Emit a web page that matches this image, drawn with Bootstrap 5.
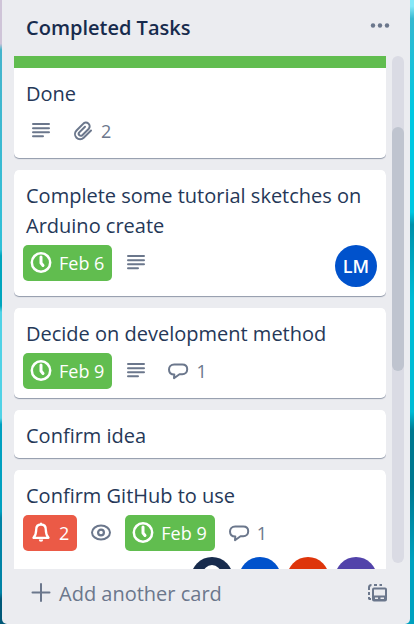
<!DOCTYPE html>
<html lang="en">
<head>
<meta charset="utf-8">
<meta name="viewport" content="width=device-width, initial-scale=1">
<title>Completed Tasks</title>
<link href="https://cdn.jsdelivr.net/npm/bootstrap@5.3.0/dist/css/bootstrap.min.css" rel="stylesheet">
<style>
  body {
    font-family: "Open Sans", "Noto Sans", sans-serif;
    font-size: 20px;
    line-height: 30px;
    color: #172b4d;
    background:
      linear-gradient(#cfc4d8 0 7%, #45b4cc 8%, #2fc0d8 40%, #00a5bd 41% 49%, #50d2e6 50% 67%, #00a0c0 68% 82%, #0083a6 83% 95%, #005878 96%) left / 50% 100% no-repeat,
      linear-gradient(#84e8f8 0 1%, #35b8d0 3%, #00c8e2 18% 34%, #0090aa 36%, #00bcd6 48% 66%, #007890 69% 78%, #00a2c0 90%) right / 50% 100% no-repeat;
  }
  .board { padding: 0 4px 0 2px; }
  .task-list { background: #ebecf0; border-radius: 0 0 5px 5px; }
  .list-head { height: 56px; padding: 0 18px 0 24px; }
  .list-head h1 { font-size: 20px; line-height: 30px; font-weight: 600; }
  .icon-btn { border: 0; background: none; padding: 0; color: #6b778c; display: flex; }
  .list-body { padding: 0 6px 0 12px; gap: 6px; min-height: 0; }
  .cards { gap: 12px; }
  .task { border: 0; border-radius: 5px; flex: none; box-shadow: 0 1px 1px #091e4266; padding: 11px 9px 9px; color: #253858; }
  .task h2 { font-size: 20px; line-height: 30px; font-weight: 400; margin: 0; padding: 0 3px; }
  .task .meta { margin-top: 4px; gap: 6px; }
  .task.title-only { padding-bottom: 7px; }
  .task.covered { border-top: 12px solid #61bd4f; border-radius: 0 0 5px 5px; }
  .chips { gap: 6px; }
  .chip { height: 36px; border-radius: 5px; color: #6b778c; font-size: 18px; line-height: 36px; display: flex; align-items: center; }
  .chip svg { width: 24px; height: 24px; margin: 0 6px; flex: none; }
  .chip span { padding-right: 8px; }
  .chip-done { background: #61bd4f; color: #fff; }
  .chip-alert { background: #eb5a46; color: #fff; }
  .people { gap: 6px; padding-top: 6px; }
  .person { width: 42px; height: 42px; border-radius: 50%; color: #fff; font-size: 18px; font-weight: 600; line-height: 42px; text-align: center; flex: none; overflow: hidden; }
  .blue { background: #0052cc; }
  .navy { background: #172b4d; }
  .red { background: #de350b; }
  .purple { background: #5243aa; }
  .track { width: 12px; border-radius: 6px; background: #dadbe4; margin-bottom: 6px; padding-top: 71px; flex: none; }
  .thumb { height: 56%; border-radius: 6px; background: #bfc4cf; }
  .list-foot { height: 55px; padding: 0 23px 6px 27px; }
  .add-card { color: #6b778c; text-decoration: none; gap: 6px; }
</style>
<script src="https://cdn.jsdelivr.net/npm/bootstrap@5.3.0/dist/js/bootstrap.bundle.min.js"></script>
</head>
<body>
<svg class="d-none" aria-hidden="true">
  <symbol id="i-text" viewBox="0 0 24 24"><path d="M4 5h16M4 9.300h16M4 13.300h16M4 17.300h10" fill="none" stroke="currentColor" stroke-width="2" stroke-linecap="round"/></symbol>
  <symbol id="i-clip" viewBox="0 0 24 24"><path d="M20 11.500l-7.300 7.200a5 5 0 0 1-7.200-7.200l6.600-6.600a3.600 3.600 0 0 1 5.700 4.800l-6.500 6.500a2 2 0 0 1-3-2.800l5.700-5.700" fill="none" stroke="currentColor" stroke-width="2" stroke-linecap="round" stroke-linejoin="round"/></symbol>
  <symbol id="i-clock" viewBox="0 0 24 24"><circle cx="12" cy="11.500" r="9.200" fill="none" stroke="currentColor" stroke-width="2.500"/><path d="M12 6v6l2 2.500" fill="none" stroke="currentColor" stroke-width="3" stroke-linecap="round" stroke-linejoin="round"/></symbol>
  <symbol id="i-talk" viewBox="0 0 24 24"><path d="M8.300 15.500C4.800 15.500 3 13.300 3 10.500S5 5.500 8.200 5.500h8c3 0 5 1.900 5 4.700s-2 5.100-5 5.100h-2.700L8 19.200z" fill="none" stroke="currentColor" stroke-width="2" stroke-linejoin="round"/></symbol>
  <symbol id="i-bell" viewBox="0 0 24 24"><path d="M12 3.500c-3.300 0-4.800 2.300-4.800 5.200 0 4-.8 5.800-2.700 8.100h15c-1.900-2.300-2.700-4.100-2.700-8.100 0-2.900-1.500-5.200-4.800-5.200z" fill="none" stroke="currentColor" stroke-width="2.300" stroke-linejoin="round"/><path d="M11 1.700h2v2h-2zM9.800 18.500h4.400a2.200 2.200 0 0 1-4.400 0z" fill="currentColor"/></symbol>
  <symbol id="i-eye" viewBox="0 0 24 24"><path d="M12 4.500c5 0 9 3.400 9 7s-4 7-9 7-9-3.400-9-7 4-7 9-7z" fill="none" stroke="currentColor" stroke-width="2"/><circle cx="12" cy="11.500" r="2.900" fill="none" stroke="currentColor" stroke-width="2.200"/></symbol>
</svg>

<div class="board vh-100">
  <section class="task-list h-100 d-flex flex-column">
    <header class="list-head d-flex flex-shrink-0 align-items-center justify-content-between">
      <h1 class="m-0">Completed Tasks</h1>
      <button class="icon-btn" type="button" aria-label="List actions">
        <svg width="24" height="24" viewBox="0 0 24 24" fill="currentColor"><circle cx="5" cy="9.500" r="2.200"/><circle cx="12" cy="9.500" r="2.200"/><circle cx="19" cy="9.500" r="2.200"/></svg>
      </button>
    </header>

    <div class="list-body d-flex flex-fill overflow-hidden">
      <div class="cards d-flex flex-column flex-grow-1 overflow-hidden">
        <article class="card task covered">
          <h2>Done</h2>
          <div class="meta chips d-flex">
            <div class="chip"><svg><use href="#i-text"/></svg></div>
            <div class="chip"><svg><use href="#i-clip"/></svg><span>2</span></div>
          </div>
        </article>

        <article class="card task">
          <h2>Complete some tutorial sketches on Arduino create</h2>
          <div class="meta d-flex justify-content-between">
            <div class="chips d-flex">
              <div class="chip chip-done"><svg><use href="#i-clock"/></svg><span>Feb 6</span></div>
              <div class="chip"><svg><use href="#i-text"/></svg></div>
            </div>
            <div class="person blue">LM</div>
          </div>
        </article>

        <article class="card task">
          <h2>Decide on development method</h2>
          <div class="meta chips d-flex">
            <div class="chip chip-done"><svg><use href="#i-clock"/></svg><span>Feb 9</span></div>
            <div class="chip"><svg><use href="#i-text"/></svg></div>
            <div class="chip"><svg><use href="#i-talk"/></svg><span>1</span></div>
          </div>
        </article>

        <article class="card task title-only">
          <h2>Confirm idea</h2>
        </article>

        <article class="card task">
          <h2>Confirm GitHub to use</h2>
          <div class="meta chips d-flex">
            <div class="chip chip-alert"><svg><use href="#i-bell"/></svg><span>2</span></div>
            <div class="chip"><svg><use href="#i-eye"/></svg></div>
            <div class="chip chip-done"><svg><use href="#i-clock"/></svg><span>Feb 9</span></div>
            <div class="chip"><svg><use href="#i-talk"/></svg><span>1</span></div>
          </div>
          <div class="people d-flex justify-content-end">
            <div class="person navy"><svg class="d-block" width="42" height="42" viewBox="0 0 42 42"><circle cx="21" cy="17" r="9" fill="#fff"/></svg></div>
            <div class="person blue"></div>
            <div class="person red"></div>
            <div class="person purple"></div>
          </div>
        </article>
      </div>
      <div class="track"><div class="thumb"></div></div>
    </div>

    <footer class="list-foot d-flex flex-shrink-0 align-items-center justify-content-between">
      <a class="add-card d-flex align-items-center" href="#">
        <svg width="24" height="24" viewBox="0 0 24 24"><path d="M12 2v17M3.500 10.500h17" fill="none" stroke="currentColor" stroke-width="2" stroke-linecap="round"/></svg>
        <span>Add another card</span>
      </a>
      <button class="icon-btn" type="button" aria-label="Create from template">
        <svg width="20" height="20" viewBox="0 0 20 20"><path d="M2 15.500V13M2 11V8M2 6V3.500Q2 1 4.500 1M7 1h3M12.500 1H15M2 15h2" fill="none" stroke="currentColor" stroke-width="2"/><rect x="6" y="4.500" width="13" height="12" rx="1" fill="none" stroke="currentColor" stroke-width="2"/><path d="M6 11.500h13v5H6z" fill="currentColor"/><path d="M8 13.500h3v1.500H8zM13.500 13.500H17v1.500h-3.500z" fill="#ebecf0"/></svg>
      </button>
    </footer>
  </section>
</div>
</body>
</html>
